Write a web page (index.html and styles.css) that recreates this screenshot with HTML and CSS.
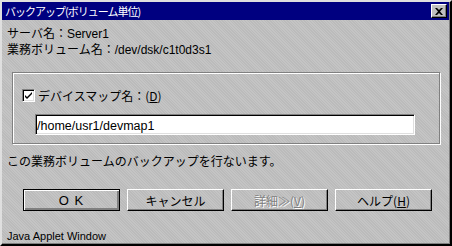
FILE: index.html
```html
<!DOCTYPE html>
<html lang="ja">
<head>
    <meta charset="UTF-8">
    <title>バックアップ(ボリューム単位)</title>
    <link rel="stylesheet" href="styles.css">
</head>
<body>
    <div class="window">
        <div class="titlebar">
            <span class="title">バックアップ(ボリューム単位)</span>
            <span class="close">
                <svg width="8" height="7" viewBox="0 0 8 7"><path d="M0 0h2l2 2 2-2h2L5 3.5 8 7H6L4 5 2 7H0l3-3.5z" fill="#000"/></svg>
            </span>
        </div>

        <div class="content">
            <div class="info">
                <div class="line">サーバ名：<span class="latin">Server1</span></div>
                <div class="line">業務ボリューム名：<span class="latin">/dev/dsk/c1t0d3s1</span></div>
            </div>

            <div class="group">
                <label class="check-row">
                    <span class="checkbox">
                        <svg width="9" height="9" viewBox="0 0 9 9"><path d="M1 4l2 2 5-5v2L3 8 1 6z" fill="#000"/></svg>
                    </span>
                    <span>デバイスマップ名：(<u>D</u>)</span>
                </label>
                <div class="field"><span class="latin">/home/usr1/devmap1</span></div>
            </div>

            <p class="message">この業務ボリュームのバックアップを行ないます。</p>

            <div class="buttons">
                <button class="btn default">O K</button>
                <button class="btn">キャンセル</button>
                <button class="btn disabled">詳細≫(<u>V</u>)</button>
                <button class="btn">ヘルプ(<u>H</u>)</button>
            </div>

            <div class="status">Java Applet Window</div>
        </div>
    </div>
</body>
</html>
```

FILE: styles.css
```css
html, body {
    margin: 0;
    padding: 0;
}

body {
    width: 452px;
    height: 246px;
    overflow: hidden;
    font-family: "Noto Sans CJK JP", "Liberation Sans", sans-serif;
    font-size: 12px;
    color: #000;
}

/* dithered gray like the old JDK dialogs */
.window {
    width: 452px;
    height: 246px;
    box-sizing: border-box;
    border: 2px solid;
    border-color: #dfdfdf #000 #000 #dfdfdf;
    box-shadow: inset -1px -1px #808080;
    background-color: #c0c0c0;
    background-image: repeating-linear-gradient(45deg, #c4c4c4 0 1px, #bbbbbb 1px 2px);
    display: flex;
    flex-direction: column;
}

.titlebar {
    height: 18px;
    margin-right: 1px;
    background-color: #000080;
    color: #fff;
    display: flex;
    align-items: center;
    justify-content: space-between;
    padding: 0 2px 0 3px;
}

.title {
    line-height: 18px;
    font-size: 11px;
    letter-spacing: -1px;
}

.close {
    width: 16px;
    height: 14px;
    box-sizing: border-box;
    background-color: #c0c0c0;
    border: 1px solid;
    border-color: #fff #000 #000 #fff;
    box-shadow: inset -1px -1px #808080;
    display: flex;
    align-items: center;
    justify-content: center;
}

.content {
    padding-left: 5px;
    display: flex;
    flex-direction: column;
}

.latin {
    font-family: "Liberation Sans", Arial, sans-serif;
}

.info {
    margin-top: 5px;
}

.line {
    height: 16px;
    line-height: 16px;
}

.group {
    margin-top: 15px;
    margin-left: 5px;
    width: 428px;
    height: 72px;
    box-sizing: border-box;
    border: 1px solid #808080;
    box-shadow: inset 1px 1px #fff, 1px 1px #fff;
}

.check-row {
    display: flex;
    align-items: center;
    margin: 16px 0 0 9px;
    height: 13px;
    gap: 3px;
}

.checkbox {
    width: 13px;
    height: 13px;
    box-sizing: border-box;
    background-color: #fff;
    border: 1px solid;
    border-color: #808080 #fff #fff #808080;
    box-shadow: inset 1px 1px #000, inset -1px -1px #dfdfdf;
    display: flex;
    align-items: center;
    justify-content: center;
}

.field {
    margin: 12px 0 0 22px;
    width: 380px;
    height: 21px;
    box-sizing: border-box;
    background-color: #fff;
    border: 1px solid;
    border-color: #808080 #fff #fff #808080;
    box-shadow: inset 1px 1px #000, inset -1px -1px #dfdfdf;
    padding-left: 1px;
    line-height: 19px;
    font-size: 12.5px;
}

.message {
    margin: 9px 0 0 0;
    height: 16px;
    line-height: 16px;
}

.buttons {
    margin: 20px 0 0 16px;
    display: flex;
    gap: 7px;
}

.btn {
    width: 97px;
    height: 22px;
    box-sizing: border-box;
    padding: 0;
    font-family: "Noto Sans CJK JP", "Liberation Sans", sans-serif;
    font-size: 12px;
    color: #000;
    background: transparent;
    border: 1px solid;
    border-color: #fff #000 #000 #fff;
    box-shadow: inset -1px -1px #808080;
}

.btn.default {
    border: 1px solid #000;
    box-shadow: inset 1px 1px #fff, inset -2px -2px #808080;
    font-family: "Liberation Sans", Arial, sans-serif;
    font-size: 13px;
    letter-spacing: 1px;
}

.btn.disabled {
    color: #808080;
    text-shadow: 1px 1px #fff;
}

.status {
    margin-top: 17px;
    height: 16px;
    line-height: 16px;
    font-family: "Liberation Sans", Arial, sans-serif;
    font-size: 11px;
}
```
